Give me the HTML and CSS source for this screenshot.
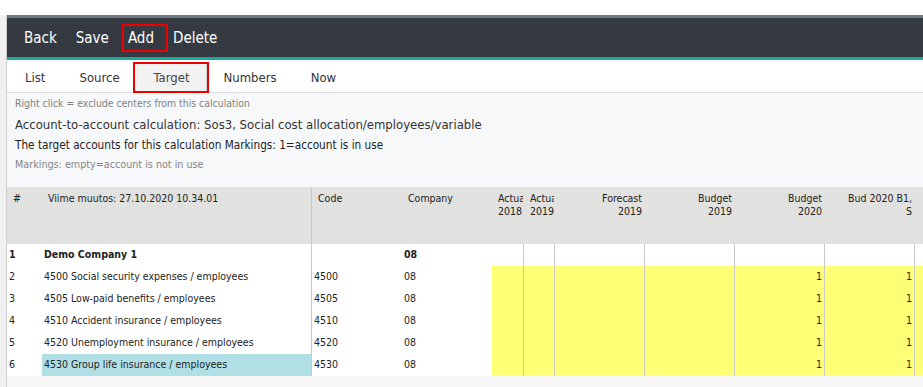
FILE: index.html
```html
<!DOCTYPE html>
<html lang="en">
<head>
    <meta charset="UTF-8">
    <meta name="viewport" content="width=device-width, initial-scale=1.0">
    <title>Account-to-account calculation</title>
    <link rel="stylesheet" href="styles.css">
</head>
<body>
    <div class="frame">
        <div class="app">
            <div class="toolbar">
                <span class="tool">Back</span>
                <span class="tool">Save</span>
                <span class="tool marked">Add</span>
                <span class="tool">Delete</span>
            </div>
            <div class="tabs">
                <span class="tab">List</span>
                <span class="tab">Source</span>
                <span class="tab active">Target</span>
                <span class="tab">Numbers</span>
                <span class="tab">Now</span>
            </div>
            <div class="info">
                <div class="hint">Right click = exclude centers from this calculation</div>
                <div class="title">Account-to-account calculation: Sos3, Social cost allocation/employees/variable</div>
                <div class="desc">The target accounts for this calculation Markings: 1=account is in use</div>
                <div class="note">Markings: empty=account is not in use</div>
            </div>
            <div class="grid">
                <div class="row head">
                    <div class="cell">#</div>
                    <div class="cell name">Viime muutos: 27.10.2020 10.34.01</div>
                    <div class="cell">Code</div>
                    <div class="cell">Company</div>
                    <div class="cell num">Actual<br>2018</div>
                    <div class="cell num">Actual<br>2019</div>
                    <div class="cell num">Forecast<br>2019</div>
                    <div class="cell num">Budget<br>2019</div>
                    <div class="cell num">Budget<br>2020</div>
                    <div class="cell num">Bud 2020 B1,<br>S</div>
                    <div class="cell num"></div>
                </div>
                <div class="row company">
                    <div class="cell">1</div>
                    <div class="cell name">Demo Company 1</div>
                    <div class="cell"></div>
                    <div class="cell">08</div>
                    <div class="cell num"></div>
                    <div class="cell num"></div>
                    <div class="cell num"></div>
                    <div class="cell num"></div>
                    <div class="cell num"></div>
                    <div class="cell num"></div>
                    <div class="cell num"></div>
                </div>
                <div class="row account">
                    <div class="cell">2</div>
                    <div class="cell name">4500 Social security expenses / employees</div>
                    <div class="cell">4500</div>
                    <div class="cell">08</div>
                    <div class="cell num"></div>
                    <div class="cell num"></div>
                    <div class="cell num"></div>
                    <div class="cell num"></div>
                    <div class="cell num">1</div>
                    <div class="cell num">1</div>
                    <div class="cell num"></div>
                </div>
                <div class="row account">
                    <div class="cell">3</div>
                    <div class="cell name">4505 Low-paid benefits / employees</div>
                    <div class="cell">4505</div>
                    <div class="cell">08</div>
                    <div class="cell num"></div>
                    <div class="cell num"></div>
                    <div class="cell num"></div>
                    <div class="cell num"></div>
                    <div class="cell num">1</div>
                    <div class="cell num">1</div>
                    <div class="cell num"></div>
                </div>
                <div class="row account">
                    <div class="cell">4</div>
                    <div class="cell name">4510 Accident insurance / employees</div>
                    <div class="cell">4510</div>
                    <div class="cell">08</div>
                    <div class="cell num"></div>
                    <div class="cell num"></div>
                    <div class="cell num"></div>
                    <div class="cell num"></div>
                    <div class="cell num">1</div>
                    <div class="cell num">1</div>
                    <div class="cell num"></div>
                </div>
                <div class="row account">
                    <div class="cell">5</div>
                    <div class="cell name">4520 Unemployment insurance / employees</div>
                    <div class="cell">4520</div>
                    <div class="cell">08</div>
                    <div class="cell num"></div>
                    <div class="cell num"></div>
                    <div class="cell num"></div>
                    <div class="cell num"></div>
                    <div class="cell num">1</div>
                    <div class="cell num">1</div>
                    <div class="cell num"></div>
                </div>
                <div class="row account">
                    <div class="cell">6</div>
                    <div class="cell name selected">4530 Group life insurance / employees</div>
                    <div class="cell">4530</div>
                    <div class="cell">08</div>
                    <div class="cell num"></div>
                    <div class="cell num"></div>
                    <div class="cell num"></div>
                    <div class="cell num"></div>
                    <div class="cell num">1</div>
                    <div class="cell num">1</div>
                    <div class="cell num"></div>
                </div>
            </div>
        </div>
    </div>
</body>
</html>
```

FILE: styles.css
```css
body {
    margin: 0;
    padding-top: 15px;
    background-color: #ffffff;
    font-family: "DejaVu Sans Condensed", "Liberation Sans", sans-serif;
    color: #222;
}
.frame {
    padding-left: 6px;
    background-color: #f0f0f0;
    height: 372px;
}
.app {
    height: 100%;
    border-left: 1px solid #cfcfcf;
    background-color: #f7f7f7;
    overflow: hidden;
}
.toolbar {
    display: flex;
    align-items: center;
    gap: 3px;
    height: 39px;
    padding-left: 13px;
    background-color: #353a42;
    border-top: 3px solid #6e7a83;
    border-bottom: 3px solid #1aab9b;
}
.tool {
    color: #ffffff;
    font-size: 15px;
    line-height: 24px;
    padding: 0 12px 0 4px;
}
.marked {
    box-shadow: 0 0 0 2px #ee0000;
}
.tabs {
    display: flex;
    padding: 4px 0 1px 1px;
    background-color: #ffffff;
    border-bottom: 1px solid #dcdde0;
}
.tab {
    font-size: 13px;
    line-height: 27px;
    padding: 0 17px;
    color: #333;
}
.tab.active {
    margin-left: -2px;
    padding: 0 17px 0 19px;
    background-color: #f2f2f2;
    box-shadow: 0 0 0 2px #ee0000, inset -1px 0 #d4d4d4;
    color: #444;
}
.info {
    box-sizing: border-box;
    height: 94px;
    padding: 3px 8px 0;
    background-color: #f7f8fa;
}
.hint {
    font-size: 10.4px;
    line-height: 14px;
    color: #808080;
}
.title {
    margin-top: 5px;
    font-size: 13px;
    line-height: 20px;
    color: #333;
}
.desc {
    font-size: 11.7px;
    line-height: 20px;
    color: #222;
}
.note {
    font-size: 10.7px;
    line-height: 20px;
    color: #858585;
}
.row {
    display: grid;
    grid-template-columns: 35px 270px 90px 90px 32px 31px 90px 90px 90px 90px 90px;
    font-size: 10.5px;
}
.cell {
    box-sizing: border-box;
    padding: 0 2px;
    white-space: nowrap;
    overflow: hidden;
    background-color: #ffffff;
}
.cell.name {
    border-right: 1px solid #c8c8c8;
}
.cell.num {
    text-align: right;
    border-right: 1px solid #c8c8c8;
}
.head {
    height: 57px;
}
.head .cell {
    padding: 5px 2px 0 6px;
    line-height: 13px;
    background-color: #e1e1df;
    white-space: normal;
}
.head .cell.num {
    border-right-color: #e1e1df;
}
.company .cell,
.account .cell {
    height: 22px;
    line-height: 21px;
}
.company .cell {
    font-weight: bold;
}
.account .cell.num {
    background-color: #ffff75;
}
.cell.selected {
    background-color: #b0e0e6;
}
```
